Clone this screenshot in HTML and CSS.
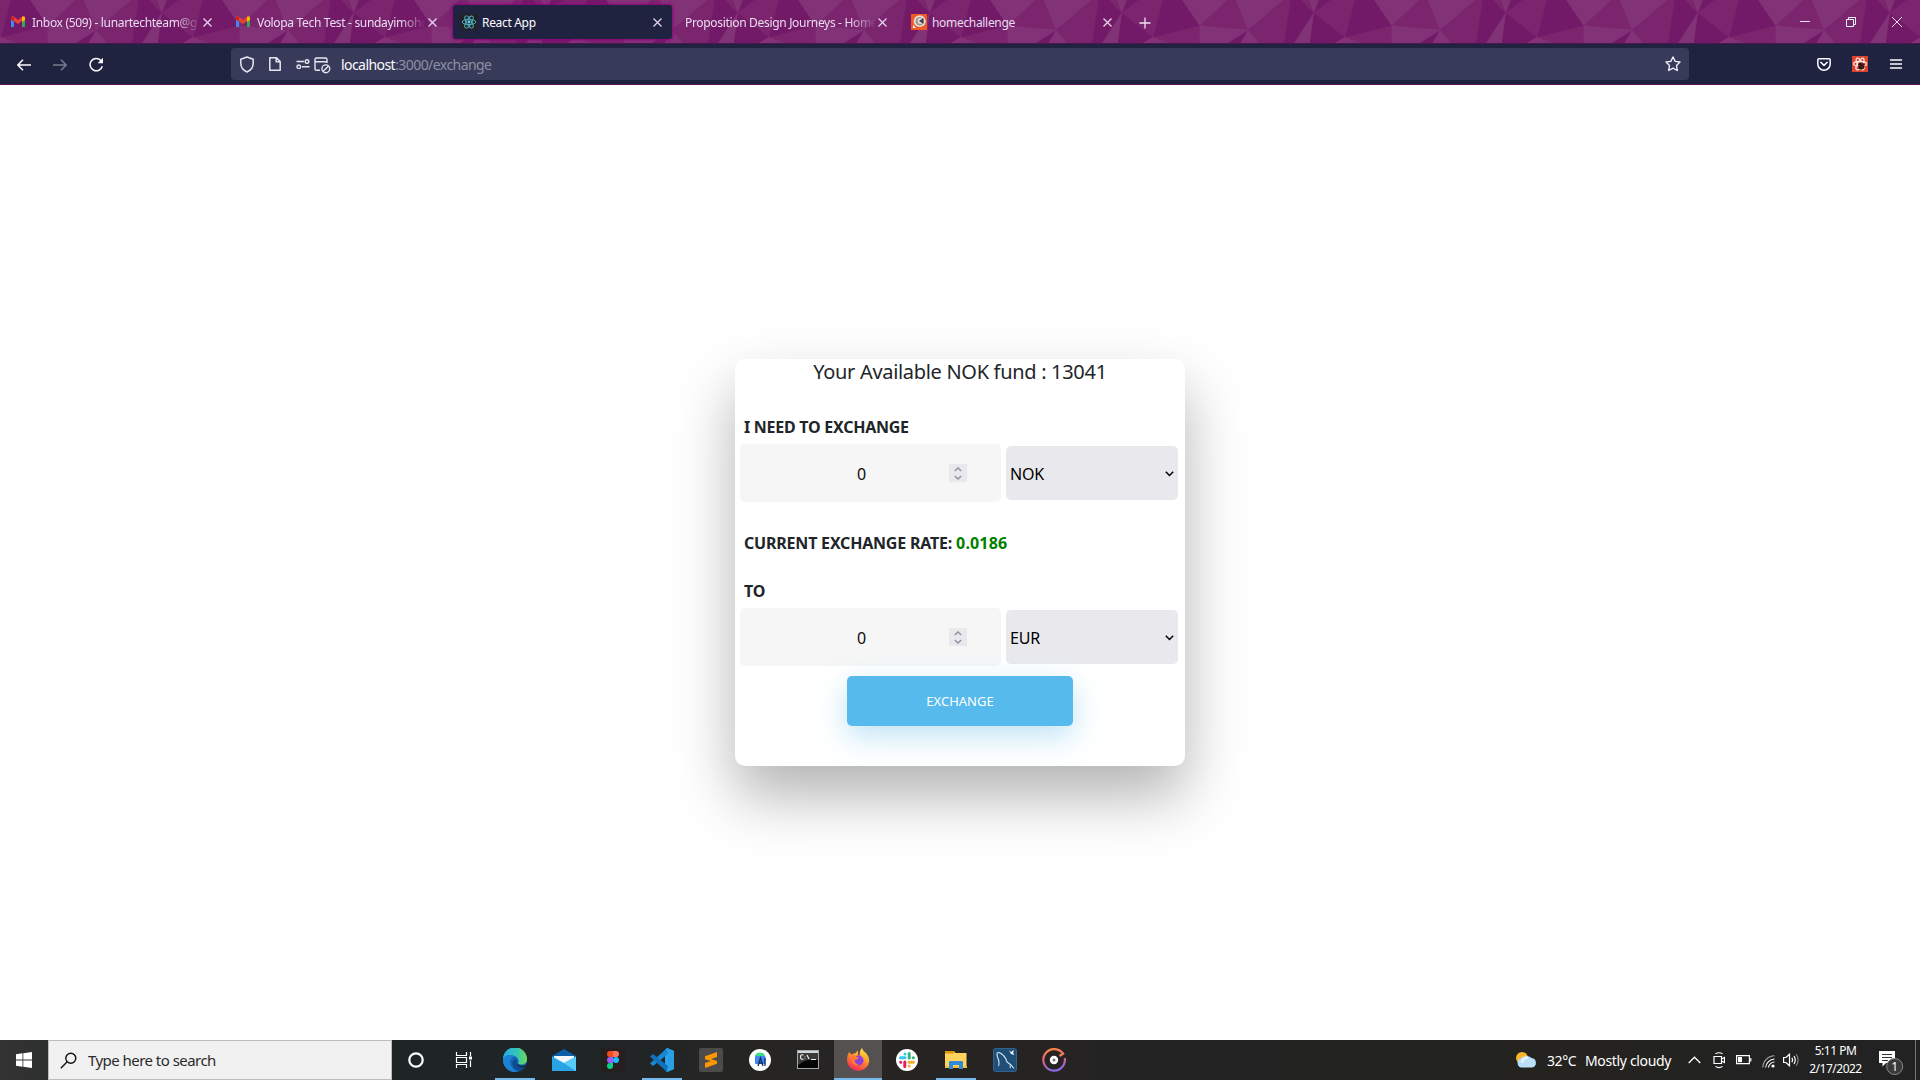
FILE: index.html
```html
<!DOCTYPE html>
<html lang="en">
<head>
<meta charset="utf-8">
<title>React App</title>
<link rel="stylesheet" href="styles.css">
</head>
<body>
<svg width="0" height="0" class="defs">
  <defs>
    <g id="facets">
      <path fill="#721a68" d="M11 0H30.4L47.7 25.7L1 37.3ZM138.7 0H149L161.7 12.7L142 43.5H131.7ZM166.7 0H179L161.7 12.7ZM161.7 12.7L193 37.3L182.7 43.5H157.7ZM96 30L88.7 43.5H75Z"/>
      <path fill="#823377" d="M30.4 0H75L47.7 25.7ZM83.7 0H131L96 30ZM157 0H166.7L161.7 12.7ZM161.7 12.7L157.7 43.5H142ZM47.7 25.7L96 30L75 43.5H47.7ZM96 30L107 43.5H88.7ZM1 37.3L17 43.5H-10Z"/>
    </g>
    <pattern id="poly" width="192" height="44" patternUnits="userSpaceOnUse">
      <rect width="192" height="44" fill="#7b256f"/>
      <use href="#facets" x="-192"/><use href="#facets"/><use href="#facets" x="192"/>
    </pattern>
    <g id="gmail">
      <path fill="#4285f4" d="M0 3v9h3V5Z"/><path fill="#34a853" d="M11 5v7h3V3Z"/>
      <path fill="#ea4335" d="M0 3Q0 1 2 1L7 5L12 1V5L7 9L0 4Z"/><path fill="#fbbc04" d="M11 2Q14 0 14 3V5L11 7Z"/>
      <path fill="#c5221f" d="M0 3Q1 .5 3 2V6.5L0 4.5Z"/>
    </g>
    <path id="x" d="M.5.5l8 8m0-8l-8 8" fill="none" stroke="#e9d7ef" stroke-width="1.2"/>
  </defs>
</svg>

<header class="tabstrip">
  <svg class="theme" width="1920" height="44"><rect width="1920" height="44" fill="url(#poly)"/></svg>
  <div class="tab">
    <svg class="fav" width="16" height="14" viewBox="0 0 16 14"><use href="#gmail"/></svg>
    <span class="tab-title fade">Inbox (509) - lunartechteam@g</span>
    <svg width="9" height="9"><use href="#x"/></svg>
  </div>
  <div class="tab">
    <svg class="fav" width="16" height="14" viewBox="0 0 16 14"><use href="#gmail"/></svg>
    <span class="tab-title fade">Volopa Tech Test - sundayimoho</span>
    <svg width="9" height="9"><use href="#x"/></svg>
  </div>
  <div class="tab active">
    <svg class="fav" width="16" height="16" viewBox="0 0 16 16"><rect width="16" height="16" rx="1" fill="#222"/><g fill="none" stroke="#53b6cb" stroke-width=".9"><ellipse cx="8" cy="8" rx="6.8" ry="2.6"/><ellipse cx="8" cy="8" rx="6.8" ry="2.6" transform="rotate(60 8 8)"/><ellipse cx="8" cy="8" rx="6.8" ry="2.6" transform="rotate(120 8 8)"/></g><circle cx="8" cy="8" r="1.4" fill="#61dafb"/></svg>
    <span class="tab-title">React App</span>
    <svg width="9" height="9"><use href="#x"/></svg>
  </div>
  <div class="tab bare">
    <span class="tab-title fade">Proposition Design Journeys - Home</span>
    <svg width="9" height="9"><use href="#x"/></svg>
  </div>
  <div class="tab">
    <svg class="fav" width="16" height="16" viewBox="0 0 16 16"><rect width="16" height="16" fill="#f05a24"/><circle cx="8.7" cy="7.2" r="5.9" fill="#e9e4df"/><circle cx="8.7" cy="7.2" r="4.2" fill="#97928e"/><circle cx="9.5" cy="7" r="2.900" fill="#dedad6"/><path d="M12.500 4v6L8 7Z" fill="#444"/><path d="M2 11v3h3Z" fill="#fff"/></svg>
    <span class="tab-title">homechallenge</span>
    <svg width="9" height="9"><use href="#x"/></svg>
  </div>
  <svg class="new-tab" width="12" height="12"><path d="M6 .5v11M.5 6h11" stroke="#f0e2f4" stroke-width="1.3"/></svg>
  <div class="win-controls">
    <svg width="10" height="10"><path d="M0 4.5h10" stroke="#e8e0f0"/></svg>
    <svg width="10" height="10"><path d="M.5 2.5h7v7h-7zM2.5 2.5v-2h7v7h-2" fill="none" stroke="#e8f0f8"/></svg>
    <svg width="10" height="10"><path d="M0 0l10 10M10 0L0 10" stroke="#e8e0f0"/></svg>
  </div>
</header>

<nav class="toolbar">
  <div class="nav-buttons">
    <svg width="14" height="12"><path d="M14 6H1.2M6 .8L.9 6l5.1 5.200" fill="none" stroke="#fbfbfe" stroke-width="1.5"/></svg>
    <svg width="14" height="12" class="dim"><path d="M0 6h12.800M8 .8L13.100 6 8 11.200" fill="none" stroke="#fbfbfe" stroke-width="1.500"/></svg>
    <svg width="15" height="15"><path d="M13.300 9.200A6.200 6.200 0 1 1 11.700 3.200L13 4.800" fill="none" stroke="#fbfbfe" stroke-width="1.500"/><path d="M14 .8V6.200H8.600Z" fill="#fbfbfe"/></svg>
  </div>
  <div class="urlbar">
    <svg width="16" height="17" viewBox="0 0 16 17"><path d="M8 1L14.200 3.300V7C14.200 11 11.500 14.500 8 16C4.500 14.500 1.800 11 1.800 7V3.300Z" fill="none" stroke="#e6e6f2" stroke-width="1.500" stroke-linejoin="round"/></svg>
    <svg class="page" width="12" height="14"><path d="M.8.8H7.500L11.200 4.500V13.200H.8ZM7.200 1V4.800H11" fill="none" stroke="#e6e6f2" stroke-width="1.500" stroke-linejoin="round"/></svg>
    <svg class="perm" width="14" height="10"><g fill="none" stroke="#e6e6f2" stroke-width="1.400"><path d="M.5 2.500H8M6 7.800h7.500"/><circle cx="11" cy="2.500" r="1.800"/><circle cx="2.800" cy="7.800" r="1.800"/></g></svg>
    <svg class="cookie" width="17" height="17"><g fill="none" stroke="#e6e6f2" stroke-width="1.400"><path d="M6 13.300H2.500Q1 13.300 1 12V2.500Q1 1 2.500 1H11.500Q13 1 13 2.500V6M1 4.800H13"/><circle cx="11.800" cy="11.800" r="3.900"/><path d="M9 14.500l5.500-5.400"/></g></svg>
    <span class="url"><b>localhost</b>:3000/exchange</span>
    <svg class="star" width="16" height="16" viewBox="0 0 16 16"><path d="M8 1L10.200 5.400L15 6L11.500 9.500L12.300 14.500L8 12.200L3.700 14.500L4.500 9.500L1 6L5.800 5.400Z" fill="none" stroke="#f0f0fa" stroke-width="1.400" stroke-linejoin="round"/></svg>
  </div>
  <div class="tools">
    <svg width="14" height="13"><path d="M2 .8H12Q13.200.8 13.200 2V6A6.200 6.200 0 0 1 .8 6V2Q.8.8 2 .8ZM3.800 4.300L7 7.400L10.200 4.300" fill="none" stroke="#fbfbfe" stroke-width="1.500" stroke-linejoin="round" stroke-linecap="round"/></svg>
    <svg width="16" height="16"><rect width="16" height="16" fill="#d9432f"/><g fill="none" stroke="#fbe3da" stroke-width="1.300"><ellipse cx="8" cy="8" rx="6.500" ry="2.500"/><ellipse cx="8" cy="8" rx="6.500" ry="2.500" transform="rotate(60 8 8)"/><ellipse cx="8" cy="8" rx="6.500" ry="2.500" transform="rotate(120 8 8)"/></g><ellipse cx="9.300" cy="10" rx="3.200" ry="3.500" fill="#24100e"/><path d="M7 9l4 3M9 7l3 3" stroke="#b03426" stroke-width=".8"/></svg>
    <svg width="12" height="10"><path d="M0 1h12M0 5h12M0 9h12" stroke="#fbfbfe" stroke-width="1.400"/></svg>
  </div>
</nav>

<main class="page-body">
  <form class="card">
    <h5 class="fund">Your Available NOK fund : 13041</h5>
    <p class="label first">I NEED TO EXCHANGE</p>
    <div class="row">
      <div class="amount"><span class="num">0</span><span class="spin"><svg width="8" height="13"><path d="M.8 4L4 1l3.200 3M.8 9L4 12l3.200-3" fill="none" stroke="#8f8f9d" stroke-width="1.400"/></svg></span></div>
      <div class="select">NOK<svg width="9" height="6"><path d="M.8.8L4.500 4.500L8.200.8" fill="none" stroke="#000" stroke-width="1.500"/></svg></div>
    </div>
    <p class="label rate">CURRENT EXCHANGE RATE: <span class="green">0.0186</span></p>
    <p class="label to">TO</p>
    <div class="row">
      <div class="amount"><span class="num">0</span><span class="spin"><svg width="8" height="13"><path d="M.8 4L4 1l3.200 3M.8 9L4 12l3.200-3" fill="none" stroke="#8f8f9d" stroke-width="1.400"/></svg></span></div>
      <div class="select">EUR<svg width="9" height="6"><path d="M.8.8L4.500 4.500L8.200.8" fill="none" stroke="#000" stroke-width="1.500"/></svg></div>
    </div>
    <button class="submit" type="button">EXCHANGE</button>
  </form>
</main>

<footer class="taskbar">
  <div class="start"><svg width="16" height="16"><path fill="#fff" d="M0 2.200L6.500 1.300V7.500H0ZM7.300 1.200L16 0V7.500H7.300ZM0 8.400H6.500V14.700L0 13.800ZM7.300 8.400H16V16L7.300 14.800Z"/></svg></div>
  <div class="search">
    <svg width="17" height="17"><circle cx="10.800" cy="6.200" r="5" fill="none" stroke="#111" stroke-width="1.400"/><path d="M7.200 9.800L.8 16.200" stroke="#111" stroke-width="1.400"/></svg>
    <span>Type here to search</span>
  </div>
  <div class="app sys"><svg width="16" height="16"><circle cx="8" cy="8" r="6.700" fill="none" stroke="#fff" stroke-width="2.200"/></svg></div>
  <div class="app sys"><svg width="18" height="16"><path d="M1.500 0V3.500H11.500V0M1.500 16V12.500H11.500V16M1.500 5.500H11.500V10.500H1.500ZM15.500 0V4M15.500 8.500V15" fill="none" stroke="#fff" stroke-width="1.200"/><rect x="14" y="4.500" width="3" height="3" fill="#fff"/></svg></div>
  <div class="apps">
    <div class="app run"><svg width="24" height="24"><defs><linearGradient id="e1" x2="1"><stop stop-color="#29a9e8"/><stop offset=".6" stop-color="#35c6b5"/><stop offset="1" stop-color="#6ddc4f"/></linearGradient></defs><circle cx="12" cy="12" r="12" fill="#1264b4"/><path d="M0 11A12 12 0 0 1 24 11.500C24 16 19 17.500 15 15.800C16 14 16 10.500 12.500 8.500C8 6 2 7 0 11Z" fill="url(#e1)"/><path d="M0 11C2 6.500 9 6 12.500 8.700C9 8 6.500 12 7.500 16C8.500 20 12 23 15 23.600A12 12 0 0 1 0 11Z" fill="#1c83d4"/><path d="M14 12C12.500 14 13 18 18 18.800C20 19 22 18.300 23.200 17.300L22 19L19 22C16 24 11 22 9.500 16C9 13 11.500 10.500 14 12Z" fill="#0d4a90"/><path d="M14 13.500C13.500 17 18.500 19.500 23.500 16.500L22.300 18.600C17 20.500 13 17.500 14 13.500Z" fill="#202426"/></svg></div>
    <div class="app"><svg width="24" height="24"><path d="M0 8L12 1L24 8V12H0Z" fill="#0b5ea8"/><path d="M2 8H22V17H2Z" fill="#f4f7fa"/><path d="M0 8.500L12 15L24 8.500V23H0Z" fill="#2fb4ee"/><path d="M0 8.500L24 23H0Z" fill="#29a3e6"/><path d="M12 15L24 8.500V23Z" fill="#57cdf7"/></svg></div>
    <div class="app"><svg width="24" height="24"><rect width="24" height="24" rx="2" fill="#251f1f"/><path d="M9 3H12V9H9A3 3 0 0 1 9 3Z" fill="#f24e1e"/><path d="M12 3H15A3 3 0 0 1 15 9H12Z" fill="#ff7262"/><path d="M9 9H12V15H9A3 3 0 0 1 9 9Z" fill="#a259ff"/><circle cx="15" cy="12" r="3" fill="#1abcfe"/><path d="M9 15H12V18A3 3 0 1 1 9 15Z" fill="#0acf83"/></svg></div>
    <div class="app run"><svg width="24" height="24"><path d="M17 0L24 3V21L17 24L15 22V2Z" fill="#2aa4f0"/><path d="M17 0L18 6L3 18L0 15.500Z" fill="#1788d4"/><path d="M0 8.500L3 6L18 18L17 24Z" fill="#0f72bc"/><path d="M17 0L24 3V21L17 24L18 18V6Z" fill="#2b9fe6"/></svg></div>
    <div class="app"><svg width="24" height="24"><rect width="24" height="24" rx="2" fill="#4b4b4b"/><path d="M6 8.300L18 4V9L12 11L18 13V15.700L6 20V15L12 13L6 11.200Z" fill="#ff9800"/></svg></div>
    <div class="app"><svg width="24" height="24"><circle cx="12" cy="12" r="11" fill="#fff"/><path d="M7 8A5 3.500 0 0 1 17 8Z" fill="#3ddc84"/><rect x="7" y="8" width="10.500" height="8" rx="1" fill="#4285f4"/><path d="M10 18L12.500 10L15 18M11 15H14.500M17 10V18" fill="none" stroke="#123057" stroke-width="1.300"/></svg></div>
    <div class="app shift"><svg width="24" height="24"><rect x="1.500" y="2.500" width="21" height="18" fill="#050505" stroke="#a6a9ac"/><path d="M2 4H22" stroke="#d5d8da" stroke-width="2"/><path d="M2 5H22V12Q12 10 2 17Z" fill="#3a3a3a"/><path d="M7.500 7Q4.500 6 4.500 9T7.500 11M9 8v.5M9 10v.5M11 7L13 11M15 11.500H20" fill="none" stroke="#eee" stroke-width="1.200"/></svg></div>
    <div class="app current"><svg width="24" height="24"><defs><linearGradient id="f1" x1=".8" x2=".3" y2="1"><stop stop-color="#fff04a"/><stop offset=".45" stop-color="#ff9428"/><stop offset="1" stop-color="#f5225f"/></linearGradient></defs><path d="M3 4L5.500 6.500Q8 5 9.500 5L12 2.500V7L14 8Q13 3 16 0Q17 3.500 20 5L21 6.500Q23.500 9 23.300 13A11.200 11 0 0 1 1 13Q.5 8 3 4Z" fill="url(#f1)"/><circle cx="12.500" cy="12.500" r="5" fill="#8a3fe0"/><path d="M5 8Q8 6.500 11 9L13 10Q11 12 8.500 12Q9 16 13 16.500Q9 18.500 6 15Z" fill="#ff7a2f"/></svg></div>
    <div class="app"><svg width="24" height="24"><circle cx="12" cy="12" r="11" fill="#fff"/><g stroke-width="3" stroke-linecap="round"><path d="M10 6V6.100M5.500 9.700H10" stroke="#36c5f0"/><path d="M14.200 5.500V10M18.300 9.800H18.400" stroke="#2eb67d"/><path d="M18.500 14.200H14M14.200 18V18.100" stroke="#ecb22e"/><path d="M9.800 18.500V14M5.700 14.200H5.800" stroke="#e01e5a"/></g></svg></div>
    <div class="app run"><svg width="24" height="24"><path d="M1 3H10L11.500 5H22.500V20H1Z" fill="#ffd35c"/><path d="M1 3H10V5.500H1Z" fill="#e09a00"/><path d="M1 18H23V20H1Z" fill="#f7bd3b"/><path d="M5 21V14Q5 13 6 13H18Q19 13 19 14V21H15V17H9V21Z" fill="#2f8ad8"/></svg></div>
    <div class="app"><svg width="24" height="24"><rect x=".5" y=".5" width="23" height="23" rx="2" fill="#1f4f78" stroke="#32638c"/><path d="M5.500 18Q7 15 4.500 9Q3 4 6 4.500Q12 7 14 14L18 17L21 20.500M17 17.500L17.500 20" fill="none" stroke="#d8e6f0" stroke-width="1.100"/><path d="M16 2L18 4L21 2L20 5L21.500 7L18 6Z" fill="#fff"/></svg></div>
    <div class="app"><svg width="24" height="24"><defs><linearGradient id="g1" y2="1" x2=".2"><stop stop-color="#ff8a3c"/><stop offset=".5" stop-color="#e0607a"/><stop offset="1" stop-color="#8c6ae0"/></linearGradient></defs><path d="M20.500 5A10.800 10.800 0 1 0 22.800 10" fill="none" stroke="url(#g1)" stroke-width="2.200"/><path d="M17.500 8L22 5" stroke="#f07a58" stroke-width="2.500"/><circle cx="12" cy="12" r="3.200" fill="#fff" stroke="#fff" stroke-width="2"/><circle cx="12" cy="12" r="1.500" fill="#777"/></svg></div>
  </div>
  <div class="tray">
    <svg class="weather" width="21" height="16"><circle cx="6" cy="6" r="6" fill="#f9b62c"/><path d="M5 15.500A4.800 4.800 0 0 1 4.500 6.500A7 6 0 0 1 15.500 6A4.800 4.800 0 0 1 16 15.500Z" fill="#b9e0f8"/><path d="M6 11Q7 5 12 6" stroke="#e4f4fe" stroke-width="2.500" fill="none"/></svg>
    <span class="temp">32°C</span><span class="sky">Mostly cloudy</span>
    <svg class="chev" width="13" height="8"><path d="M.7 7L6.500 1.200L12.300 7" fill="none" stroke="#fff" stroke-width="1.300"/></svg>
    <svg class="meet" width="12" height="17"><path d="M1 4.500H8.500V11.500H1ZM8.500 7L11.500 5.500V10.500L8.500 9M2.500 1.800Q6-.3 9.500 1.800M2.500 14.500Q6 16.600 9.500 14.500" fill="none" stroke="#fff" stroke-width="1.200"/></svg>
    <svg class="batt" width="16" height="10"><path d="M.6.600H13.400V8.600H.6ZM14.800 3V6.500" fill="none" stroke="#fff" stroke-width="1.200"/><rect x="2" y="2" width="4" height="5.200" fill="#fff"/></svg>
    <svg class="wifi" width="13" height="13"><g fill="none" stroke="#fff" stroke-width="1.100"><path d="M.8 12.500A12 12 0 0 1 12.500.8" opacity=".6"/><path d="M3.700 12.500A9 9 0 0 1 12.500 4M6.500 12.500A6 6 0 0 1 12.500 7"/></g><circle cx="11" cy="11" r="1.600" fill="#fff"/></svg>
    <svg class="vol" width="17" height="14"><path d="M.6 4.500H3L6.500 1.200V12.800L3 9.500H.6ZM8.800 4.800Q10.300 7 8.800 9.200M11 3Q13.500 7 11 11" fill="none" stroke="#fff" stroke-width="1.200"/><path d="M13.300 1.200Q17 7 13.300 12.800" fill="none" stroke="#888" stroke-width="1.100"/></svg>
    <div class="clock"><span>5:11 PM</span><span>2/17/2022</span></div>
    <svg class="notes" width="25" height="26" viewBox="0 0 25 26"><path d="M0 1H16V13H7L3.500 16.500V13H0Z" fill="#fff"/><path d="M3 4.500H13M3 7.500H13M3 10.500H9" stroke="#333"/><circle cx="15.700" cy="16.500" r="8" fill="#3a3a3a" stroke="#8a8a8a"/><text x="15.700" y="21" text-anchor="middle" class="count">1</text></svg>
    <span class="desk"></span>
  </div>
</footer>
</body>
</html>
```
FILE: styles.css
```css
* { box-sizing: border-box; }
body {
  margin: 0;
  width: 1920px;
  height: 1080px;
  overflow: hidden;
  display: flex;
  flex-direction: column;
  background: #fff;
  font-family: "Noto Sans", "Open Sans", sans-serif;
}
svg { display: block; flex: none; }
.defs { position: absolute; }

/* Tab strip */
.tabstrip {
  position: relative;
  height: 44px;
  display: flex;
  align-items: center;
  flex: none;
  overflow: hidden;
  border-bottom: 1px solid #4a1650;
}
.theme { position: absolute; left: 0; top: 0; }
.tab {
  position: relative;
  width: 219px;
  height: 34px;
  margin: 1px 3px 0;
  padding: 0 10px 0 8px;
  display: flex;
  align-items: center;
  border-radius: 3px;
  color: #eadcf0;
  font-size: 12px;
  letter-spacing: -.32px;
}
.tab.bare { padding-left: 7px; }
.tab.active {
  background: #1f2340;
  color: #fbfbfe;
  box-shadow: 0 0 3px 1px #90007f;
}
.fav { margin-right: 5px; }
.tab-title {
  flex: 1;
  white-space: nowrap;
  line-height: 20px;
  padding-top: 2px;
}
.fade {
  -webkit-mask-image: linear-gradient(to left, transparent 2px, #000 28px);
  mask-image: linear-gradient(to left, transparent 2px, #000 28px);
}
.new-tab { position: relative; margin: 2px 0 0 14px; }
.win-controls {
  position: relative;
  margin: 1px 18px 0 auto;
  display: flex;
  gap: 36px;
}

/* Navigation bar */
.toolbar {
  height: 41px;
  flex: none;
  display: flex;
  align-items: center;
  background: #1f2340;
  border-bottom: 1px solid #5f1458;
}
.nav-buttons {
  width: 231px;
  padding: 1px 0 0 17px;
  display: flex;
  align-items: center;
  gap: 22px;
}
.dim { opacity: .4; }
.urlbar {
  width: 1458px;
  height: 32px;
  padding: 0 8px;
  display: flex;
  align-items: center;
  border-radius: 4px;
  background: #383a59;
}
.page { margin-left: 14px; }
.perm { margin-left: 15px; }
.cookie { margin: 2px 0 0 4px; }
.url {
  margin-left: 10px;
  padding-top: 1px;
  font-size: 14px;
  letter-spacing: -.56px;
  color: #8e8fa3;
}
.url b { font-weight: 400; color: #fbfbfe; }
.star { margin-left: auto; }
.tools {
  flex: 1;
  padding: 0 18px 0 0;
  display: flex;
  justify-content: flex-end;
  align-items: center;
  gap: 21px;
}
.tools svg:nth-child(2) { margin-right: 1px; }

/* Exchange card */
.page-body {
  flex: 1;
  padding-top: 274px;
  display: flex;
  justify-content: center;
  align-items: flex-start;
}
.card {
  width: 450px;
  height: 407px;
  padding: 0 5px;
  display: flex;
  flex-direction: column;
  border-radius: 10px;
  background: #fff;
  box-shadow: 0 30px 60px 0 rgba(0, 0, 0, .3);
  color: #212529;
}
.fund {
  margin: 0;
  padding-top: 1px;
  font-size: 20px;
  font-weight: 400;
  line-height: 24px;
  letter-spacing: -.31px;
  text-align: center;
}
.label {
  margin: 0;
  padding-left: 4px;
  font-size: 16px;
  font-weight: 700;
  line-height: 24px;
  letter-spacing: -.26px;
}
.first { margin: 31px 0 5px; }
.rate { margin: 29px 0 24px; letter-spacing: -.2px; }
.to { margin-bottom: 5px; }
.green { color: green; letter-spacing: .15px; }
.row { display: flex; align-items: center; gap: 5px; }
.amount {
  width: 261px;
  height: 58px;
  padding: 0 34px;
  display: flex;
  align-items: center;
  border-radius: 5px;
  background: #f6f6f6;
  color: #0d0d0d;
  font-size: 16px;
}
.num { flex: 1; text-align: center; padding-top: 1px; }
.spin {
  width: 18px;
  height: 18px;
  display: flex;
  align-items: center;
  justify-content: center;
  background: #e9e9ed;
}
.select {
  width: 172px;
  height: 54px;
  padding: 1px 4px 0 4px;
  display: flex;
  align-items: center;
  justify-content: space-between;
  border-radius: 5px;
  background: #e9e9ed;
  color: #000;
  font-size: 16px;
  letter-spacing: -.2px;
}
.submit {
  width: 226px;
  height: 50px;
  margin: 10px auto 0;
  border: 0;
  border-radius: 5px;
  background: #56baed;
  box-shadow: 0 10px 30px 0 rgba(95, 186, 233, .4);
  color: #fff;
  font: 13px "Noto Sans", sans-serif;
}

/* Taskbar */
.taskbar {
  height: 40px;
  flex: none;
  display: flex;
  align-items: stretch;
  background: linear-gradient(90deg, #333 0, #2e2f30 48px, #1f2424 392px, #1f2527 560px, #262523 760px, #262423 1000px, #222 1200px, #24231f 1600px, #222 1750px);
  color: #fff;
}
.start { width: 48px; display: flex; align-items: center; justify-content: center; }
.search {
  width: 344px;
  padding: 0 0 0 11px;
  display: flex;
  align-items: center;
  gap: 11px;
  border: 1px solid #bdbdbd;
  background: #f1f1f1;
  color: #2b2b2b;
  font-size: 15px;
  letter-spacing: -.54px;
}
.apps { display: flex; gap: 1px; margin-left: 3px; }
.app {
  width: 48px;
  display: flex;
  align-items: center;
  justify-content: center;
}
.shift { padding-right: 2px; }
.run { background: linear-gradient(#76b9ed, #76b9ed) bottom / 40px 2px no-repeat; }
.current { background: #545150; box-shadow: inset 0 -2px #76b9ed; }
.tray { margin-left: auto; display: flex; align-items: center; font-size: 14px; }
.weather { margin-right: 1px; }
.temp { margin-left: 9px; width: 38px; letter-spacing: -.4px; }
.sky { width: 103px; letter-spacing: -.34px; }
.meet { margin-left: 12px; }
.batt { margin-left: 11px; }
.wifi { margin: 3px 0 0 10px; }
.vol { margin-left: 8px; }
.clock {
  width: 74px;
  padding-right: 3px;
  display: flex;
  flex-direction: column;
  align-items: center;
  font-size: 12px;
  line-height: 18px;
  letter-spacing: -.5px;
}
.notes { margin: 5px 0 0 5px; }
.count { font-size: 12px; fill: #fff; }
.desk { width: 1px; height: 40px; margin: 0 4px 0 11px; background: #777; }
```
